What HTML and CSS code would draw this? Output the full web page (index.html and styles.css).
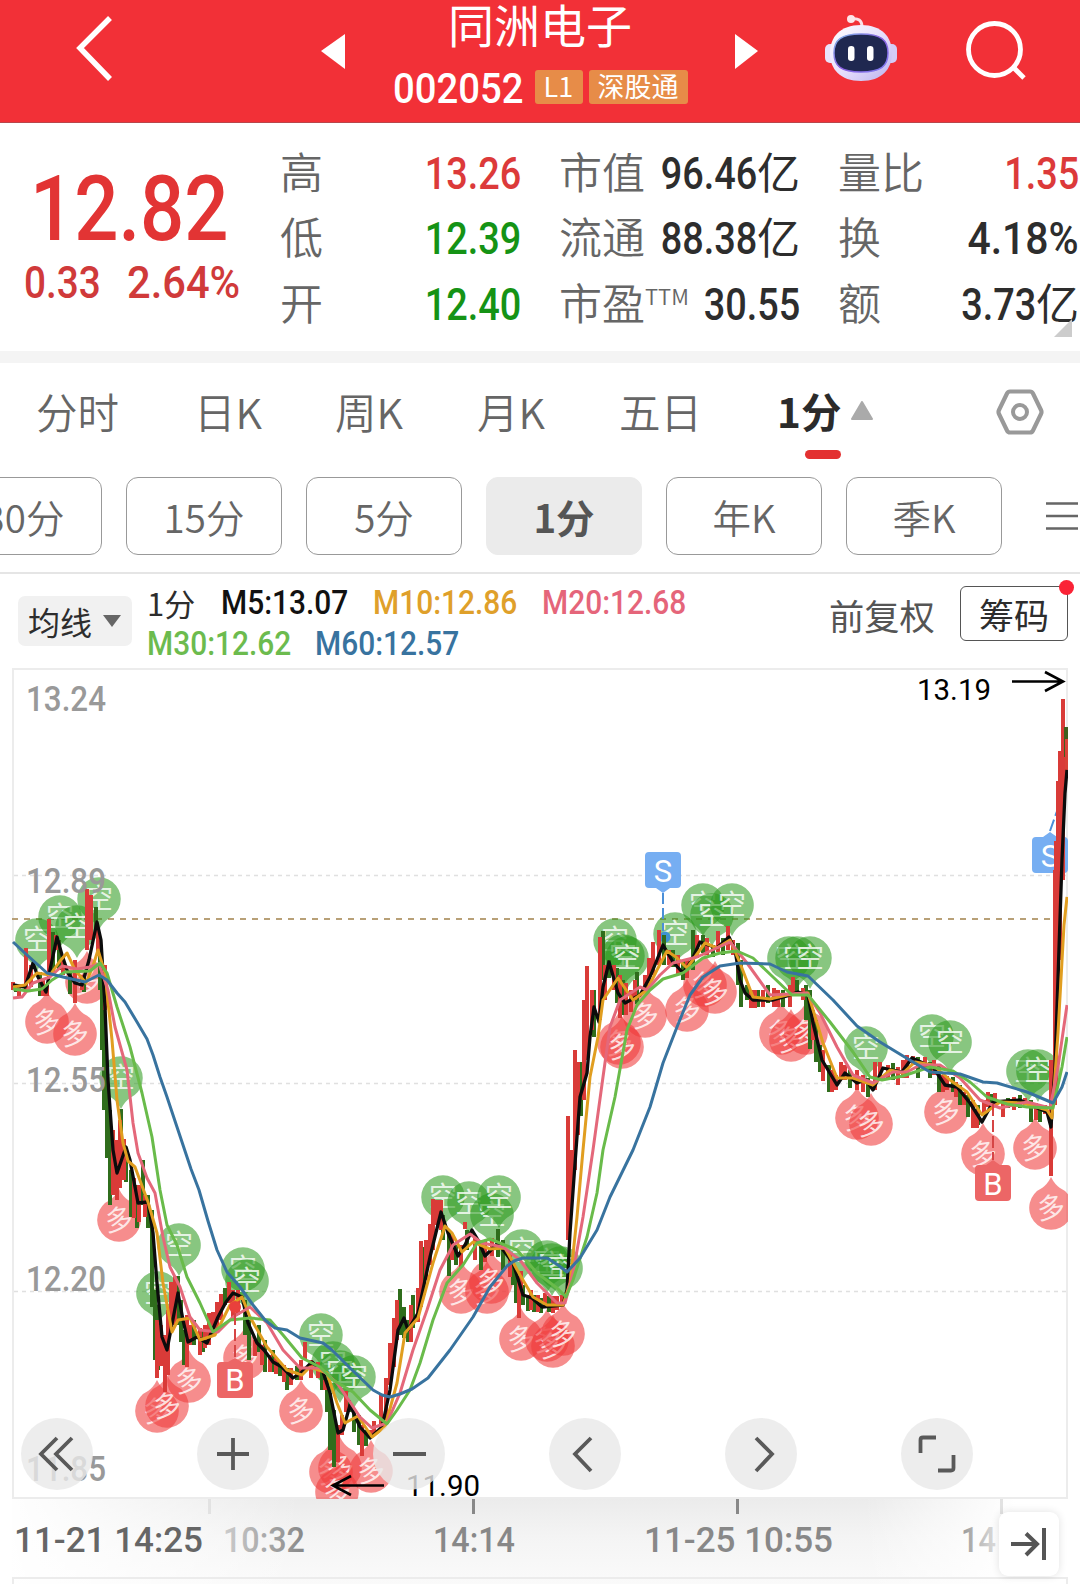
FILE: index.html
```html
<!DOCTYPE html>
<html lang="zh-CN">
<head>
<meta charset="utf-8">
<title>同洲电子 002052</title>
<link rel="stylesheet" href="styles.css">
</head>
<body>
<header class="top">
  <svg class="back" width="120" height="123" viewBox="0 0 120 123"><path d="M110 18L80 48L110 79" fill="none" stroke="#fff" stroke-width="5.5"/></svg>
  <svg class="prev" width="70" height="123" viewBox="0 0 70 123"><path d="M21 51L45 34V69Z" fill="#fff"/></svg>
  <div class="stock">
    <h1>同洲电子</h1>
    <div class="code"><span class="code-num"><span class="n">002052</span></span><span class="tag tag-l1">L1</span><span class="tag">深股通</span></div>
  </div>
  <svg class="next" width="70" height="123" viewBox="0 0 70 123"><path d="M48 51L25 34V69Z" fill="#fff"/></svg>
  <svg class="tools" width="300" height="123" viewBox="780 0 300 123">
    <defs>
      <linearGradient id="head" x1="0" y1="0" x2="1" y2="1"><stop offset="0" stop-color="#fff"/><stop offset=".55" stop-color="#e4dcfb"/><stop offset="1" stop-color="#b9b2ee"/></linearGradient>
      <linearGradient id="rim" x1="0" y1="0" x2="1" y2="1"><stop offset="0" stop-color="#7fb9e8"/><stop offset=".5" stop-color="#8a5fe0"/><stop offset="1" stop-color="#7d7df0"/></linearGradient>
    </defs>
    <path d="M851 19Q862 17 862 27" fill="none" stroke="#fbdfe6" stroke-width="3"/><circle cx="851" cy="19" r="4" fill="#fde6ea"/>
    <rect x="825" y="44" width="12" height="19" rx="5" fill="#e9e3fb"/><rect x="885" y="44" width="12" height="19" rx="5" fill="#d4ccf6"/>
    <path d="M861 25C882 25 892 37 892 53S882 81 861 81S830 69 830 53S840 25 861 25Z" fill="url(#head)"/>
    <path d="M861 34C881 34 888 40 888 53S881 72 861 72S834 66 834 53S841 34 861 34Z" fill="#1f2850" stroke="url(#rim)" stroke-width="1.500"/>
    <rect x="848" y="46" width="6.500" height="15" rx="3.200" fill="#fff"/><rect x="867" y="46" width="6.500" height="15" rx="3.200" fill="#fff"/>
    <circle cx="994.500" cy="49.500" r="26" fill="none" stroke="#fff" stroke-width="4.800"/><path d="M1013 67L1024 78" stroke="#fff" stroke-width="4.800"/>
  </svg>
</header>

<section class="quote">
  <div class="price"><div class="last"><span>12.82</span></div><div class="chg"><span class="n">0.33</span><span class="n pct">2.64%</span></div></div>
  <dl class="c1">
    <div><dt>高</dt><dd class="red"><span class="n">13.26</span></dd></div>
    <div><dt>低</dt><dd class="green"><span class="n">12.39</span></dd></div>
    <div><dt>开</dt><dd class="green"><span class="n">12.40</span></dd></div>
  </dl>
  <dl class="c2">
    <div><dt>市值</dt><dd><span class="n">96.46</span>亿</dd></div>
    <div><dt>流通</dt><dd><span class="n">88.38</span>亿</dd></div>
    <div><dt>市盈<sup>TTM</sup></dt><dd><span class="n">30.55</span></dd></div>
  </dl>
  <dl class="c3">
    <div><dt>量比</dt><dd class="red"><span class="n">1.35</span></dd></div>
    <div><dt>换</dt><dd><span class="n pct">4.18%</span></dd></div>
    <div><dt>额</dt><dd><span class="n">3.73</span>亿</dd></div>
  </dl>
  <i class="corner"></i>
</section>

<nav class="tabs">
  <span>分时</span><span>日K</span><span>周K</span><span>月K</span><span>五日</span>
  <span class="on">1分<svg width="24" height="20" viewBox="0 0 24 20"><path d="M12 1L22 18H2Z" fill="#aaa" stroke="#aaa" stroke-width="2" stroke-linejoin="round"/></svg></span>
  <svg class="gear" width="50" height="48" viewBox="0 0 50 48"><path d="M15 3.500H35Q37 3.500 38 5.500L46 22Q47 24 46 26L38 42.500Q37 44.500 35 44.500H15Q13 44.500 12 42.500L4 26Q3 24 4 22L12 5.500Q13 3.500 15 3.500Z" fill="none" stroke="#999" stroke-width="4.200"/><circle cx="25" cy="24" r="7" fill="none" stroke="#999" stroke-width="4"/></svg>
</nav>
<nav class="pills">
  <span>30分</span><span>15分</span><span>5分</span><span class="on">1分</span><span>年K</span><span>季K</span>
  <svg width="34" height="30" viewBox="0 0 34 30"><path d="M1 2.500H33M1 15H33M1 27.500H33" stroke="#666" stroke-width="2.600"/></svg>
</nav>

<section class="legend">
  <button class="ma">均线<svg width="20" height="14" viewBox="0 0 20 14"><path d="M1 1H19L10 13Z" fill="#666"/></svg></button>
  <div class="vals">
    <div><span class="period">1分</span><span class="m5">M5:13.07</span><span class="m10">M10:12.86</span><span class="m20">M20:12.68</span></div>
    <div><span class="m30">M30:12.62</span><span class="m60">M60:12.57</span></div>
  </div>
  <span class="adj">前复权</span>
  <button class="chips">筹码<i></i></button>
</section>

<section class="plot">
<svg width="1080" height="916" viewBox="0 668 1080 916">
  <defs>
    <clipPath id="area"><rect x="11" y="668" width="1057" height="831"/></clipPath>
    <g id="k"><path d="M0 31C-3 25 -6 22 -9 20A21.800 21.800 0 1 1 9 20C6 22 3 25 0 31Z" fill="#2b991d" fill-opacity=".56"/><text y="10" text-anchor="middle" font-size="28" fill="#fff" fill-opacity=".8">空</text></g>
    <g id="d"><path d="M0 -31C-3 -25 -6 -22 -9 -20A21.800 21.800 0 1 0 9 -20C6 -22 3 -25 0 -31Z" fill="#f03a3a" fill-opacity=".58"/><text y="10" text-anchor="middle" font-size="28" fill="#fff" fill-opacity=".8" transform="rotate(-8)">多</text></g>
    <linearGradient id="shade" x1="0" y1="0" x2="0" y2="1"><stop offset="0" stop-color="#ebebeb"/><stop offset=".45" stop-color="#f4f4f4"/><stop offset="1" stop-color="#fafafa"/></linearGradient>
    <linearGradient id="side"><stop offset="0" stop-color="#fff"/><stop offset=".28" stop-color="#fff" stop-opacity="0"/><stop offset=".8" stop-color="#fff" stop-opacity="0"/><stop offset=".94" stop-color="#fff"/></linearGradient>
    <linearGradient id="fadein"><stop offset="0" stop-color="#ccc"/><stop offset="1" stop-color="#888"/></linearGradient>
    <linearGradient id="fadeout"><stop offset="0" stop-color="#999"/><stop offset="1" stop-color="#ddd"/></linearGradient>
  </defs>
  <rect x="12" y="1498" width="1068" height="86" fill="url(#shade)"/><rect x="0" y="1498" width="1080" height="86" fill="url(#side)"/>
  <g fill="none" stroke="#ececec" stroke-width="2"><rect x="13" y="669" width="1054" height="829"/><path d="M13 1584V1578H1067V1584"/></g>
  <path d="M14 875.500H1066M14 1083.500H1066M14 1291.500H1066" stroke="#e0e0e0" stroke-width="1.300" stroke-dasharray="4 4"/>
  <path d="M12 919H1066" stroke="#b8a077" stroke-width="2" stroke-dasharray="6 6"/>
  <g clip-path="url(#area)">
    <g class="cjk">
      <use href="#k" x="37" y="940"/><use href="#k" x="60" y="917"/><use href="#k" x="77" y="927"/><use href="#k" x="99" y="899"/><use href="#k" x="121" y="1078"/><use href="#k" x="179" y="1245"/><use href="#k" x="158" y="1293"/><use href="#k" x="243" y="1269"/><use href="#k" x="247" y="1281"/><use href="#k" x="321" y="1335"/><use href="#k" x="333" y="1363"/><use href="#k" x="340" y="1372"/><use href="#k" x="354" y="1377"/><use href="#k" x="443" y="1197"/><use href="#k" x="469" y="1203"/><use href="#k" x="492" y="1215"/><use href="#k" x="499" y="1197"/><use href="#k" x="522" y="1251"/><use href="#k" x="547" y="1262"/><use href="#k" x="552" y="1265"/><use href="#k" x="561" y="1268"/><use href="#k" x="615" y="940"/><use href="#k" x="623" y="956"/><use href="#k" x="627" y="958"/><use href="#k" x="675" y="934"/><use href="#k" x="703" y="905"/><use href="#k" x="712" y="915"/><use href="#k" x="732" y="905"/><use href="#k" x="789" y="958"/><use href="#k" x="797" y="958"/><use href="#k" x="810" y="958"/><use href="#k" x="866" y="1048"/><use href="#k" x="932" y="1036"/><use href="#k" x="950" y="1042"/><use href="#k" x="1028" y="1071"/><use href="#k" x="1038" y="1071"/>
      <use href="#d" x="47" y="1022"/><use href="#d" x="75" y="1034"/><use href="#d" x="87" y="982"/><use href="#d" x="119" y="1220"/><use href="#d" x="157" y="1411"/><use href="#d" x="167" y="1406"/><use href="#d" x="189" y="1381"/><use href="#d" x="245" y="1358"/><use href="#d" x="301" y="1411"/><use href="#d" x="331" y="1472"/><use href="#d" x="340" y="1468"/><use href="#d" x="337" y="1492"/><use href="#d" x="371" y="1471"/><use href="#d" x="461" y="1292"/><use href="#d" x="487" y="1292"/><use href="#d" x="491" y="1282"/><use href="#d" x="521" y="1339"/><use href="#d" x="547" y="1340"/><use href="#d" x="553" y="1346"/><use href="#d" x="563" y="1334"/><use href="#d" x="619" y="1043"/><use href="#d" x="622" y="1047"/><use href="#d" x="645" y="1016"/><use href="#d" x="687" y="1010"/><use href="#d" x="705" y="985"/><use href="#d" x="715" y="992"/><use href="#d" x="781" y="1033"/><use href="#d" x="791" y="1040"/><use href="#d" x="806" y="1033"/><use href="#d" x="857" y="1118"/><use href="#d" x="871" y="1124"/><use href="#d" x="946" y="1112"/><use href="#d" x="983" y="1154"/><use href="#d" x="1035" y="1148"/><use href="#d" x="1051" y="1208"/>
    </g>
    <g class="mark">
      <path d="M649 852H677Q681 852 681 856V884Q681 888 677 888H670L663 893L656 888H649Q645 888 645 884V856Q645 852 649 852Z" fill="#76aef2"/><path d="M663 893V931" stroke="#4a8fd8" stroke-width="2" stroke-dasharray="11 4"/><circle cx="665" cy="937" r="5.500" fill="#3f93d0"/><text x="663" y="882">S</text>
      <path d="M1036 837H1043L1050 832L1057 837H1064Q1068 837 1068 841V869Q1068 873 1064 873H1036Q1032 873 1032 869V841Q1032 837 1036 837Z" fill="#76aef2"/><path d="M1050 831L1066 786" stroke="#4a8fd8" stroke-width="2" stroke-dasharray="12 4"/><text x="1050" y="867">S</text>
    </g>
    <g fill="none" stroke-width="4">
      <path stroke="#2f6d1c" d="M16 984V992M40 972V996M53 932V975M59 940V970M70 972V994M84 975V992M96 907V928M100 945V990M102 965V1050M104 1010V1110M107 1070V1158M110 1110V1205M121 1109V1145M126 1155V1182M131 1170V1217M137 1185V1228M143 1160V1205M148 1195V1228M152 1210V1307M155 1290V1360M158 1305V1370M178 1276V1325M181 1300V1342M184 1330V1365M194 1320V1345M203 1330V1352M225 1288V1305M245 1300V1335M249 1320V1360M259 1325V1352M265 1340V1372M273 1350V1372M280 1362V1376M287 1368V1390M297 1366V1380M322 1370V1390M327 1380V1412M330 1393V1450M334 1410V1467M349 1400V1412M354 1410V1432M359 1415V1445M366 1430V1446M400 1289V1335M404 1307V1338M408 1320V1342M413 1295V1328M424 1247V1295M443 1215V1240M449 1230V1276M456 1245V1265M467 1230V1250M481 1240V1270M498 1229V1257M503 1240V1270M513 1260V1285M516 1270V1303M523 1285V1305M528 1295V1311M534 1295V1312M541 1298V1313M549 1296V1312M581 1062V1116M594 990V1037M603 931V980M609 960V978M617 968V1003M623 980V1015M637 972V1004M648 975V992M664 935V965M673 950V967M683 960V980M693 930V970M703 935V953M713 945V957M723 938V955M738 943V985M741 960V1007M747 985V1000M758 990V1007M768 985V1003M783 990V1007M797 980V995M806 985V1020M810 990V1049M816 1020V1062M820 1045V1072M829 1065V1092M850 1070V1088M868 1078V1097M893 1063V1080M918 1057V1078M930 1062V1078M939 1065V1092M953 1077V1092M960 1085V1105M968 1095V1117M978 1105V1125M991 1094V1105M1008 1098V1108M1020 1095V1108M1031 1100V1122M1040 1106V1122"/>
      <path stroke="#d93b38" d="M13 982V990M19 988V996M26 948V990M31 965V987M43 980V996M47 985V996M49 919V975M56 935V950M63 955V975M75 960V1003M82 975V990M87 889V950M91 895V940M98 930V955M105 965V1010M113 1130V1195M117 1140V1200M120 1120V1188M124 1139V1180M134 1178V1218M139 1185V1222M145 1195V1217M157 1320V1378M161 1325V1366M165 1335V1392M168 1310V1375M171 1282V1330M175 1276V1325M187 1315V1367M190 1325V1345M200 1328V1355M205 1325V1348M209 1313V1345M213 1312V1335M217 1302V1330M221 1294V1320M229 1282V1303M233 1290V1320M238 1290V1315M255 1340V1356M262 1345V1365M270 1355V1372M276 1358V1374M284 1365V1382M291 1368V1385M301 1360V1380M305 1342V1360M311 1360V1378M318 1362V1378M325 1380V1390M338 1425V1462M342 1415V1435M346 1391V1412M362 1425V1456M370 1430V1438M374 1421V1435M381 1395V1425M386 1378V1420M390 1343V1385M394 1318V1367M397 1300V1340M411 1305V1342M418 1288V1322M421 1241V1307M426 1240V1280M430 1224V1265M433 1199V1250M437 1200V1225M441 1200V1230M452 1235V1260M461 1245V1267M465 1222V1229M475 1235V1260M485 1240V1262M492 1238V1256M510 1252V1277M519 1280V1318M521 1271V1295M531 1290V1310M538 1295V1312M545 1293V1308M553 1296V1313M557 1296V1310M562 1295V1305M568 1116V1240M571 1150V1210M575 1050V1170M578 1062V1135M584 1000V1100M587 966V1060M592 990V1030M600 937V1020M605 965V1000M614 965V990M620 975V1018M626 983V1015M631 990V1012M635 980V1000M645 975V992M649 958V985M653 942V975M659 930V965M669 950V965M678 955V975M687 960V978M697 935V958M707 938V955M718 931V952M728 926V950M733 940V955M751 990V1008M755 990V1008M763 990V1007M774 988V1007M778 990V1007M790 985V1007M793 977V995M803 988V1000M813 1010V1040M823 1050V1081M832 1070V1092M836 1075V1090M841 1062V1080M845 1065V1080M857 1070V1090M863 1075V1092M875 1062V1090M880 1062V1080M888 1065V1080M898 1067V1085M903 1060V1078M907 1055V1078M913 1056V1065M925 1057V1070M934 1060V1075M943 1075V1092M947 1076V1090M956 1082V1097M964 1092V1105M973 1100V1128M977 1110V1128M984 1100V1115M988 1092V1107M995 1093V1105M1003 1100V1117M1014 1097V1110M1025 1098V1105M1036 1103V1120M1045 1105V1114M1051 1060V1176M1055 870V1105M1056 841V1095M1058 781V1000M1060 751V960M1063 699V880"/>
      <path stroke="#3f5f1d" d="M1066 727V757"/><path stroke="#d94238" d="M1067 739V775"/>
    </g>
    <g fill="none" stroke-width="3" stroke-linejoin="round">
      <path stroke="#0c0c0c" stroke-width="3.300" d="M13 985L25 987L33 963L38 977L46 992L50 970L57 937L62 955L68 973L75 983L82 985L89 960L97 922L101 940L105 1007L108 1080L113 1150L117 1173L126 1147L130 1160L138 1203L148 1202L153 1233L157 1283L162 1337L167 1350L178 1293L183 1320L188 1342L197 1337L207 1343L218 1317L226 1302L233 1293L242 1297L248 1323L257 1343L264 1350L273 1362L282 1367L293 1378L302 1372L312 1362L323 1372L330 1393L338 1433L343 1430L350 1405L360 1427L370 1438L382 1427L390 1390L398 1330L404 1318L408 1330L418 1313L430 1257L441 1212L448 1233L458 1256L465 1245L472 1230L478 1240L485 1256L498 1243L513 1263L523 1295L532 1298L542 1307L563 1305L567 1290L570 1233L576 1150L580 1097L587 1073L590 1037L594 1007L599 1022L603 987L609 962L618 993L625 1003L640 995L650 977L663 945L673 962L683 973L692 960L700 942L717 948L729 937L735 950L740 980L745 993L753 1000L773 1000L787 996L798 992L808 995L813 1023L822 1060L837 1085L845 1073L857 1083L866 1080L873 1090L883 1068L902 1072L912 1058L923 1063L933 1067L945 1085L957 1087L970 1103L982 1122L993 1102L1020 1100L1035 1107L1047 1112L1051 1127L1055 1067L1062 860L1065 793L1067 770"/>
      <path stroke="#e19e20" d="M13 987L25 985L37 973L50 975L60 961L67 953L75 970L86 983L93 966L98 950L105 973L112 1040L117 1100L123 1143L128 1161L135 1167L148 1202L157 1233L163 1283L172 1332L178 1320L190 1318L200 1340L215 1335L230 1305L242 1297L250 1317L267 1347L287 1370L302 1375L310 1367L327 1373L337 1403L345 1423L358 1416L372 1437L385 1427L397 1383L405 1333L418 1318L433 1263L445 1226L452 1233L462 1252L473 1242L490 1249L505 1248L520 1275L533 1297L547 1305L563 1305L570 1283L577 1217L583 1150L590 1077L598 1037L603 1000L618 978L633 1000L647 990L657 970L667 951L676 957L687 968L705 943L717 948L730 940L740 963L753 997L770 999L787 995L808 993L823 1043L837 1078L853 1078L873 1085L890 1070L903 1073L915 1062L933 1065L950 1080L967 1092L982 1115L1000 1102L1023 1103L1047 1110L1052 1118L1058 1033L1064 925L1067 897"/>
      <path stroke="#e4687a" d="M13 998L22 997L33 983L50 977L62 966L77 969L90 967L99 964L108 990L115 1027L127 1070L133 1123L138 1153L147 1178L155 1193L163 1237L170 1267L180 1287L190 1317L200 1330L218 1332L233 1317L250 1307L267 1323L283 1350L300 1368L320 1368L337 1383L350 1402L360 1417L372 1428L387 1423L400 1393L413 1350L427 1310L440 1270L453 1245L470 1234L482 1243L503 1247L520 1260L537 1283L557 1303L565 1303L573 1273L583 1217L593 1150L603 1077L610 1027L620 1000L640 987L647 990L660 975L673 963L697 957L730 942L747 963L770 995L807 993L820 1013L837 1047L853 1075L873 1083L893 1072L907 1072L920 1065L940 1065L960 1078L980 1100L1000 1108L1027 1102L1050 1108L1058 1067L1067 1005"/>
      <path stroke="#69bb4a" d="M13 989L28 991L42 989L52 980L65 972L90 971L100 963L107 973L117 1007L130 1047L142 1093L152 1137L160 1190L167 1225L177 1245L187 1277L200 1303L213 1332L230 1320L250 1318L270 1320L283 1335L302 1358L320 1367L333 1380L353 1392L370 1410L387 1424L397 1410L410 1390L420 1363L433 1320L447 1283L463 1265L477 1243L490 1239L517 1250L537 1273L557 1288L566 1297L573 1280L587 1237L597 1193L603 1150L615 1097L627 1030L637 1005L650 990L663 979L683 973L703 958L720 953L737 951L753 958L773 977L792 995L808 995L830 1022L853 1052L870 1077L882 1080L903 1076L930 1067L953 1071L970 1082L987 1097L1007 1104L1027 1107L1053 1108L1062 1067L1067 1037"/>
      <path stroke="#38739f" d="M13 942L27 955L37 964L47 973L63 977L85 982L99 975L107 980L117 993L125 1002L137 1022L147 1039L153 1055L160 1077L167 1097L177 1127L191 1169L199 1190L208 1221L217 1250L227 1272L240 1287L253 1305L265 1320L275 1328L287 1330L300 1338L323 1343L332 1350L350 1368L373 1390L382 1395L390 1397L400 1394L412 1389L428 1378L450 1350L473 1317L490 1287L507 1266L514 1261L523 1258L547 1258L558 1265L567 1272L580 1258L597 1230L610 1197L633 1150L650 1107L663 1063L677 1027L690 995L703 977L720 966L740 963L770 964L787 972L808 976L833 1000L857 1026L880 1042L903 1056L930 1072L960 1074L983 1082L997 1083L1027 1092L1053 1103L1062 1087L1067 1072"/>
    </g>
    <g class="mark">
      <circle cx="235" cy="1307" r="6" fill="#e9403c"/><path d="M235 1313V1358M993 1104V1160" stroke="#d64545" stroke-width="2" stroke-dasharray="12 4"/>
      <path d="M221 1362H228L235 1358L242 1362H249Q253 1362 253 1366V1394Q253 1398 249 1398H221Q217 1398 217 1394V1366Q217 1362 221 1362Z" fill="#ec6666"/><text x="235" y="1391">B</text>
      <path d="M979 1165H986L993 1160L1000 1165H1007Q1011 1165 1011 1169V1197Q1011 1201 1007 1201H979Q975 1201 975 1197V1169Q975 1165 979 1165Z" fill="#ec6666"/><text x="993" y="1195">B</text>
    </g>
  </g>
  <g class="ylab">
    <text x="26" y="711" textLength="80" lengthAdjust="spacingAndGlyphs">13.24</text><text x="26" y="893" textLength="80" lengthAdjust="spacingAndGlyphs">12.89</text><text x="26" y="1092" textLength="80" lengthAdjust="spacingAndGlyphs">12.55</text><text x="26" y="1291" textLength="80" lengthAdjust="spacingAndGlyphs">12.20</text><text x="26" y="1481" textLength="80" lengthAdjust="spacingAndGlyphs">11.85</text>
  </g>
  <g class="ext"><text x="917" y="700" textLength="74" lengthAdjust="spacingAndGlyphs">13.19</text><text x="406" y="1496" textLength="74" lengthAdjust="spacingAndGlyphs">11.90</text></g>
  <path d="M1012 681.500H1062M1045 672L1063 681.500L1045 691M384 1485.500H334M351 1476L333 1485.500L351 1495" fill="none" stroke="#000" stroke-width="2.600"/>
  <path d="M473.500 1499V1514M737.500 1499V1514" stroke="#888" stroke-width="3"/><path d="M209.500 1499V1514M1001.500 1499V1514" stroke="#e2e2e2" stroke-width="3"/>
  <g class="xlab">
    <text x="14" y="1552" textLength="189" lengthAdjust="spacingAndGlyphs" fill="#666">11-21 14:25</text>
    <text x="223" y="1552" textLength="82" lengthAdjust="spacingAndGlyphs" fill="url(#fadein)">10:32</text>
    <text x="433" y="1552" textLength="82" lengthAdjust="spacingAndGlyphs" fill="#888">14:14</text>
    <text x="644" y="1552" textLength="189" lengthAdjust="spacingAndGlyphs" fill="#888">11-25 10:55</text>
    <text x="961" y="1552" textLength="35" lengthAdjust="spacingAndGlyphs" fill="url(#fadeout)">14</text>
  </g>
</svg>
<div class="controls">
  <button><svg viewBox="0 0 72 72"><path d="M36 20L20 36L36 52M51 20L35 36L51 52"/></svg></button>
  <button><svg viewBox="0 0 72 72"><path d="M20 36H52M36 20V52"/></svg></button>
  <button><svg viewBox="0 0 72 72"><path d="M20 36H53"/></svg></button>
  <button><svg viewBox="0 0 72 72"><path d="M42 20L26 36L42 53"/></svg></button>
  <button><svg viewBox="0 0 72 72"><path d="M31 20L47 36L31 53"/></svg></button>
  <button><svg viewBox="0 0 72 72"><path d="M19.500 35V22Q19.500 19.500 22 19.500H35M37 52.500H50Q52.500 52.500 52.500 50V37"/></svg></button>
</div>
<button class="latest"><svg width="60" height="64" viewBox="0 0 60 64"><path d="M12 32H37M27 21.500L38 32L27 43M45 16V48" fill="none" stroke="#555" stroke-width="4"/></svg></button>
</section>
</body>
</html>
```
FILE: styles.css
```css
* { box-sizing: border-box; }
body {
  margin: 0;
  width: 1080px;
  height: 1584px;
  overflow: hidden;
  background: #fff;
  color: #2d2d2d;
  font-family: "Noto Sans CJK SC", sans-serif;
}
svg { display: block; flex: none; }
button { padding: 0; margin: 0; border: 0; font: inherit; color: inherit; }
h1, dl, dd { margin: 0; }

/* condensed figures */
.n {
  display: inline-block;
  font-family: Roboto, "Noto Sans CJK SC", sans-serif;
  font-weight: 500;
  transform: scaleX(.86);
  transform-origin: right;
}

.top {
  display: grid;
  grid-template-columns: 300px 70px 340px 70px 300px;
  height: 123px;
  background: #f23037;
  border-bottom: 1px solid #b9464b;
  color: #fff;
}
.stock { display: flex; flex-direction: column; align-items: center; }
.stock h1 { height: 50px; font-size: 46px; line-height: 46px; font-weight: 400; }
.code { display: flex; align-items: center; height: 73px; }
.code-num { width: 142px; height: 46px; margin-top: -6px; font-size: 43px; line-height: 46px; }
.code-num .n { transform: scaleX(.89); transform-origin: left; }
.tag { height: 34px; margin-top: 1px; padding: 0 9px; border-radius: 3px; background: #e78c48; font-size: 27px; line-height: 32px; }
.tag-l1 { width: 48px; margin-right: 6px; }

.quote {
  position: relative;
  display: grid;
  grid-template-columns: 280px 241px 38px 241px 38px 241px;
  height: 228px;
  padding-top: 14px;
}
.price { color: #e23434; }
.last { height: 100px; padding-left: 30px; margin-top: 23px; font: 500 90px/100px Roboto, sans-serif; }
.last span { display: inline-block; transform: scaleX(.865); transform-origin: left; }
.chg { display: flex; gap: 14px; padding-left: 24px; margin-top: -3px; font-size: 45px; line-height: 52px; color: #d03a3a; }
.chg .n { transform-origin: left; }
.chg .pct { transform: scaleX(.925); }
.quote dl > div { display: flex; height: 65.5px; align-items: center; white-space: nowrap; font-size: 43px; }
.c2 { grid-column: 4; }
.c3 { grid-column: 6; }
dt { color: #666; font-weight: 350; }
dt sup { font-size: 22px; line-height: 1; vertical-align: 15px; }
.quote dd { margin-left: auto; }
dd .n { font-size: 44px; margin-left: -20px; }
dd .pct { transform: scaleX(.93); }
.red { color: #dc3a3a; }
.green { color: #159315; }
.corner { position: absolute; right: 8px; bottom: 14px; border: 9px solid transparent; border-right-color: #ccc; border-bottom-color: #ccc; }

.tabs {
  display: grid;
  grid-template-columns: 158px 141px 142px 142px 158px 218px 50px;
  align-items: center;
  height: 126px;
  padding: 10px 0 14px 36px;
  box-shadow: inset 0 12px #f4f4f4;
}
.tabs span { margin-top: -3px; font-size: 41.5px; line-height: 48px; color: #666; font-weight: 350; }
.tabs .on { position: relative; display: flex; align-items: center; gap: 9px; color: #2b2b2b; font-weight: 700; font-size: 40.5px; }
.tabs .on::after { content: ""; position: absolute; left: 28px; top: 63px; width: 36px; height: 9px; border-radius: 5px; background: #e33131; }

.pills { display: flex; gap: 24px; height: 97px; margin-left: -54px; border-bottom: 2px solid #e5e5e5; }
.pills span {
  flex: none;
  width: 156px;
  height: 78px;
  border: 1.500px solid #999;
  border-radius: 12px;
  text-align: center;
  font-size: 38.5px;
  line-height: 76px;
  font-weight: 350;
  color: #666;
}
.pills .on { background: #ebebeb; border-color: #ebebeb; font-weight: 700; color: #555; }
.pills svg { margin: 24px 0 0 19px; }

.legend { display: flex; height: 94px; padding: 0 12px 0 18px; align-items: flex-start; }
.ma { display: flex; align-items: center; gap: 10px; width: 114px; height: 50px; margin-top: 22px; padding-left: 10px; border-radius: 7px; background: #f1f1f1; font-size: 32px; }
.vals { width: 697px; padding: 9px 0 0 15px; font: 500 32.5px/41px Roboto, "Noto Sans CJK SC", sans-serif; }
.vals div { display: flex; white-space: nowrap; }
.vals span { transform: scaleX(.92); transform-origin: left; width: 168px; }
.vals .period { width: 74px; transform: none; font: 400 31px/39px "Noto Sans CJK SC", sans-serif; }
.vals .m5 { width: 152px; color: #111; }
.vals .m10 { width: 169px; }
.m10 { color: #dfa02a; }
.m20 { color: #e5657a; }
.m30 { color: #6cbb4e; }
.m60 { color: #38739f; }
.adj { width: 131px; margin-top: 15px; font-size: 35.3px; line-height: 52px; color: #555; }
.chips { position: relative; width: 108px; height: 55px; margin-top: 12px; border: 1.500px solid #555; border-radius: 6px; background: #fff; font-size: 35px; line-height: 51px; }
.chips i { position: absolute; top: -7px; right: -7px; width: 15px; height: 15px; border-radius: 50%; background: #fa2336; }

.plot { position: relative; height: 916px; }
.plot .cjk text { font-family: "Noto Sans CJK SC", sans-serif; font-weight: 500; }
.mark text { font: 31px Roboto, sans-serif; fill: #fff; text-anchor: middle; }
.ylab { font: 500 35px Roboto, sans-serif; fill: #999; }
.ext { font: 400 30px Roboto, sans-serif; fill: #000; }
.xlab { font: 500 35px Roboto, sans-serif; }
.controls { position: absolute; left: 21px; top: 750px; display: flex; gap: 104px; }
.controls button { width: 72px; height: 72px; border-radius: 50%; background: rgba(232, 232, 232, .8); }
.controls path { fill: none; stroke: #595959; stroke-width: 3.800; }
.latest { position: absolute; left: 999px; top: 844px; width: 60px; height: 64px; border-radius: 9px; background: #fff; box-shadow: 0 0 8px rgba(0, 0, 0, .12); }
```
